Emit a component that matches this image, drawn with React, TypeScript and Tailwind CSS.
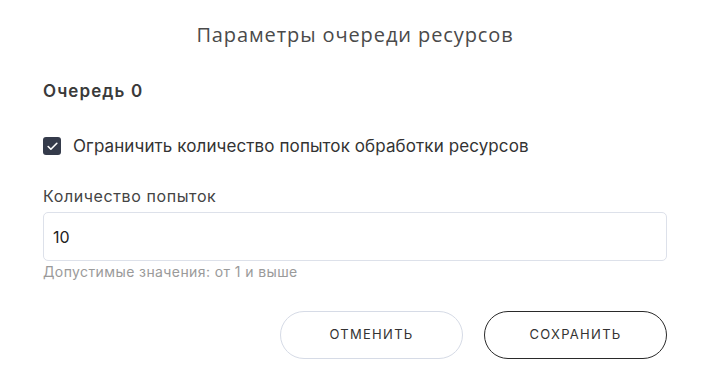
import { Check } from 'lucide-react';

export default function App() {
  return (
    <div className="w-[713px] h-[391px] bg-white text-[#333] font-['Inter',sans-serif]">
      <div className="pt-[23px] pl-[43px] pr-[46px]">
        <h2 className="text-center text-[20px] leading-[24px] text-[#4a4a4a] font-['Open_Sans',sans-serif] tracking-[0.9px]">
          Параметры очереди ресурсов
        </h2>

        <div className="mt-[34px] text-[17px] leading-[20px] font-semibold tracking-[1.1px] text-[#3a3a3a]">Очередь 0</div>

        <label className="mt-[35px] flex items-center gap-[12px] text-[17px] leading-[20px] tracking-[0.1px] text-[#333]">
          <span className="w-[18px] h-[18px] rounded-[3px] bg-[#353b4b] flex items-center justify-center">
            <Check size={13} strokeWidth={3} className="text-white" />
          </span>
          Ограничить количество попыток обработки ресурсов
        </label>

        <div className="mt-[30px] text-[16px] leading-[20px] tracking-[0.6px] text-[#444]">Количество попыток</div>
        <div className="mt-[6px] h-[49px] border border-[#dde1ea] rounded-[5px] flex items-center px-[9px] text-[16px] text-[#222]">
          10
        </div>
        <div className="mt-[3px] text-[14px] leading-[16px] tracking-[0.4px] text-[#9a9a9a]">Допустимые значения: от 1 и выше</div>

        <div className="mt-[31px] flex justify-end gap-[21px]">
          <button className="w-[183px] h-[48px] rounded-full border border-[#d6dbe6] text-[13px] tracking-[1.3px] text-[#333]">
            ОТМЕНИТЬ
          </button>
          <button className="w-[183px] h-[48px] rounded-full border border-[#2a2a2a] text-[13px] tracking-[1.3px] text-[#333]">
            СОХРАНИТЬ
          </button>
        </div>
      </div>
    </div>
  );
}
